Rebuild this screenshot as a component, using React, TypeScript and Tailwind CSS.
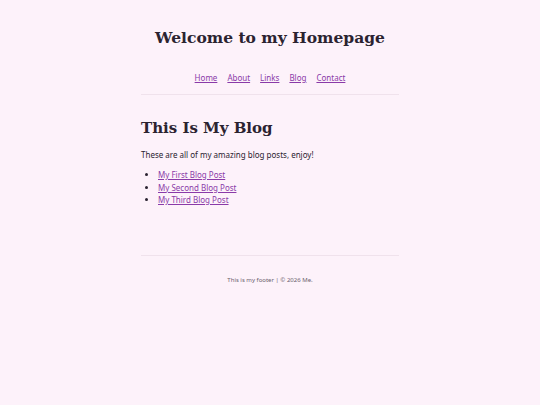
const serif = { fontFamily: '"DejaVu Serif", Georgia, serif' };

export default function App() {
  return (
    <div className="min-h-[405px] bg-[#fdf2fa] text-[#2a2230]" style={{ fontFamily: '"Noto Sans", sans-serif' }}>
      <div className="mx-auto w-[258px]">
        <header className="pt-[26px] text-center">
          <h1 className="whitespace-nowrap text-[15.5px] font-bold leading-[24px] text-[#2b2330]" style={serif}>
            Welcome to my Homepage
          </h1>
          <nav className="mt-[22px] flex justify-center gap-[10px] text-[8px] leading-[12px]">
            {["Home", "About", "Links", "Blog", "Contact"].map((l) => (
              <a key={l} href="#" className="text-[#8a3aa8] underline">{l}</a>
            ))}
          </nav>
        </header>
        <div className="mt-[10px] h-px bg-[#f0e2ec]" />
        <main className="pt-[21px]">
          <h2 className="text-[15px] font-bold leading-[24px] text-[#2b2330]" style={serif}>
            This Is My Blog
          </h2>
          <p className="mt-[9px] text-[8px] leading-[12px]">These are all of my amazing blog posts, enjoy!</p>
          <ul className="mt-[8px] list-disc pl-[17px] text-[8px] leading-[12.5px]">
            <li><a href="#" className="text-[#8a3aa8] underline">My First Blog Post</a></li>
            <li><a href="#" className="text-[#8a3aa8] underline">My Second Blog Post</a></li>
            <li><a href="#" className="text-[#8a3aa8] underline">My Third Blog Post</a></li>
          </ul>
        </main>
        <div className="mt-[48px] h-px bg-[#f0e2ec]" />
        <footer className="pt-[20px] text-center text-[6px] leading-[9px] text-[#6b5f6e]">
          This is my footer | © 2026 Me.
        </footer>
      </div>
    </div>
  );
}
